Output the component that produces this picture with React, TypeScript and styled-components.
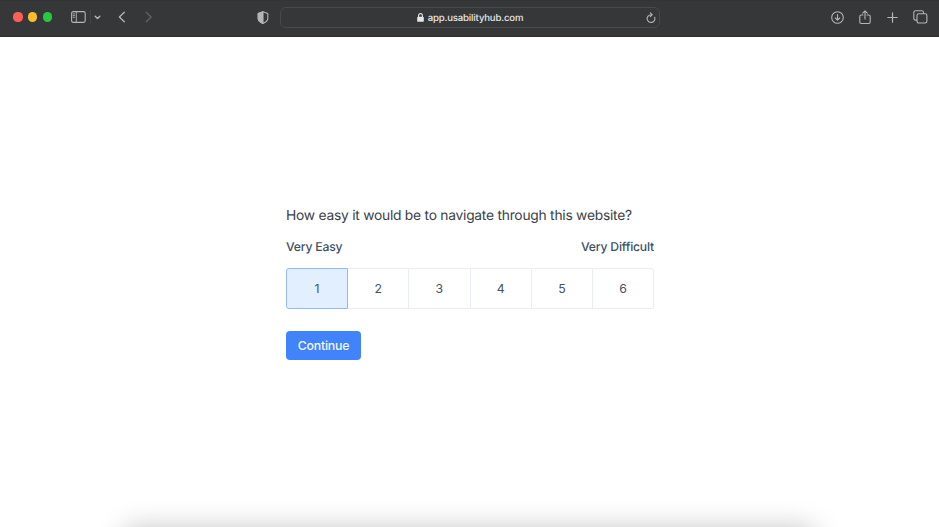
import React, { useState } from "react";
import styled, { createGlobalStyle } from "styled-components";

const GlobalStyle = createGlobalStyle`
  * { box-sizing: border-box; }
  html, body { margin: 0; background: #fff; }
  body { font-family: Inter, "Liberation Sans", sans-serif; overflow: hidden; text-rendering: geometricPrecision; }
  button { font: inherit; margin: 0; padding: 0; }
`;

const Window = styled.div`
  position: relative;
  width: 939px;
  height: 527px;
  display: flex;
  flex-direction: column;
  overflow: hidden;
  background: #fff;
`;

const Toolbar = styled.header`
  flex: none;
  height: 37px;
  display: grid;
  grid-template-columns: 280px 380px 1fr;
  padding-bottom: 3px;
  background: #363739;
  border-top: 1px solid #333436;
  border-bottom: 1px solid #2e2f31;
  color: #b4b5b6;
`;

const LeftControls = styled.div`
  display: flex;
  align-items: center;
  padding-left: 13.4px;
`;

const TrafficLights = styled.div`
  display: flex;
  gap: 5.6px;
  margin-right: 18.6px;
`;

const Light = styled.span<{ $color: string }>`
  width: 9.2px;
  height: 9.2px;
  border-radius: 50%;
  background: ${(p) => p.$color};
`;

const Icon = styled.svg<{ $gap?: number; $dim?: boolean }>`
  display: block;
  flex: none;
  fill: none;
  stroke: currentColor;
  stroke-width: 1.1;
  stroke-linecap: round;
  stroke-linejoin: round;
  margin-left: ${(p) => p.$gap ?? 0}px;
  color: ${(p) => (p.$dim ? "#616264" : "inherit")};
`;

const Divider = styled.span`
  width: 1px;
  height: 14px;
  margin-left: 4px;
  background: #424345;
`;

const AddressBar = styled.div`
  align-self: center;
  height: 21px;
  display: grid;
  grid-template-columns: 1fr auto 1fr;
  align-items: center;
  margin-top: 1px;
  border: 1px solid #48494b;
  border-radius: 6px;
`;

const Address = styled.div`
  grid-column: 2;
  display: flex;
  align-items: center;
  gap: 4px;
  color: #e6e6e7;
  font-size: 9.6px;
  font-weight: 500;
  line-height: 12px;
  letter-spacing: -0.17px;
`;

const Host = styled.span`
  padding-top: 2px;
`;

const Reload = styled.div`
  justify-self: end;
  margin-right: 3px;
`;

const RightControls = styled.div`
  display: flex;
  align-items: center;
  justify-content: flex-end;
  padding-right: 11px;
`;

const Page = styled.main`
  flex: 1;
  display: flex;
  flex-direction: column;
  align-items: flex-start;
  width: 368px;
  margin-left: 286px;
  padding-top: 169px;
`;

const Question = styled.h1`
  margin: 0;
  font-size: 13.8px;
  font-weight: 400;
  line-height: 20px;
  letter-spacing: -0.24px;
  white-space: nowrap;
  color: #3b4149;
`;

const ScaleLabels = styled.div`
  width: 100%;
  display: flex;
  justify-content: space-between;
  margin-top: 13px;
  font-size: 12.2px;
  font-weight: 500;
  line-height: 16px;
  letter-spacing: -0.2px;
  color: #40505f;
`;

const Scale = styled.div`
  width: 100%;
  height: 41px;
  display: grid;
  grid-template-columns: 62px repeat(4, 61.25px) 1fr;
  margin-top: 13px;
`;

const Choice = styled.button<{ $selected: boolean }>`
  border: 1px solid ${(p) => (p.$selected ? "#8fb9fa" : "#e9eef5")};
  border-left-width: ${(p) => (p.$selected ? 1 : 0)}px;
  background: ${(p) => (p.$selected ? "#e1efff" : "#fff")};
  color: #46535f;
  font-size: 12.3px;
  line-height: 38px;
  &:first-child { border-left-width: 1px; border-radius: 3px 0 0 3px; }
  &:last-child { border-radius: 0 3px 3px 0; }
`;

const ContinueButton = styled.button`
  width: 75px;
  height: 29px;
  margin-top: 22px;
  border: 0;
  border-radius: 4px;
  background: #4083fb;
  color: #f5f8ff;
  font-size: 12.3px;
  font-weight: 500;
  letter-spacing: -0.2px;
`;

const DockShadow = styled.div`
  position: absolute;
  left: 125px;
  right: 125px;
  top: 529px;
  height: 40px;
  box-shadow: 0 0 28px rgba(0, 0, 0, 0.25);
`;

const lights = ["#fd5f57", "#febb2f", "#28c840"];
const choices = [1, 2, 3, 4, 5, 6];

export default function App() {
  const [selected, setSelected] = useState(1);

  return (
    <>
      <GlobalStyle />
      <Window>
        <Toolbar>
          <LeftControls>
            <TrafficLights>
              {lights.map((color) => <Light key={color} $color={color} />)}
            </TrafficLights>
            <Icon width="15" height="12" viewBox="0 0 15 12">
              <rect x=".6" y=".6" width="13.6" height="10.8" rx="1.6" />
              <path d="M5.3.8v10.4M2.1 2.9h1.4M2.1 4.6h1.4M2.1 6.3h1.4" strokeWidth=".9" />
            </Icon>
            <Divider />
            <Icon $gap={3.4} width="7" height="5" viewBox="0 0 7 5">
              <path d="M1.2 1.2 3.5 3.5 5.8 1.2" strokeWidth="1.4" />
            </Icon>
            <Icon $gap={17.2} width="8" height="12" viewBox="0 0 8 12">
              <path d="M6.3 1.2 1.4 6l4.9 4.8" strokeWidth="1.3" />
            </Icon>
            <Icon $gap={18.4} $dim width="8" height="12" viewBox="0 0 8 12">
              <path d="M1.2 1.2 6.1 6l-4.9 4.8" strokeWidth="1.3" />
            </Icon>
            <Icon $gap={104.2} width="12" height="13" viewBox="0 0 12 13">
              <path d="M6 .8 10.8 2.5v5c0 2.1-2.6 4-4.8 5-2.2-1-4.8-2.9-4.8-5v-5z" />
              <path d="M6 .8 1.2 2.5v5c0 2.1 2.6 4 4.8 5z" fill="currentColor" />
            </Icon>
          </LeftControls>
          <AddressBar>
            <Address>
              <Icon width="7" height="9" viewBox="0 0 7 9">
                <rect x=".2" y="3.8" width="6.6" height="5" rx=".9" fill="currentColor" stroke="none" />
                <path d="M1.6 4V2.5a1.9 1.9 0 0 1 3.8 0V4" />
              </Icon>
              <Host>app.usabilityhub.com</Host>
            </Address>
            <Reload>
              <Icon width="10" height="12" viewBox="0 0 10 12">
                <path d="M8.7 5.3A3.9 3.9 0 1 1 5 2.7h.9M4.3.8l1.9 1.9-1.9 1.9" />
              </Icon>
            </Reload>
          </AddressBar>
          <RightControls>
            <Icon width="13" height="13" viewBox="0 0 13 13">
              <circle cx="6.5" cy="6.5" r="5.8" />
              <path d="M6.5 3.5v5.7M4.3 7l2.2 2.2L8.7 7" />
            </Icon>
            <Icon $gap={15} width="12" height="15" viewBox="0 0 12 15">
              <path d="M4 5H2.2Q.8 5 .8 6.3v5.8q0 1.4 1.4 1.4h7.6q1.4 0 1.4-1.4V6.3Q11.2 5 9.8 5H8M6 9V.9M3.7 3.1 6 .9l2.3 2.2" />
            </Icon>
            <Icon $gap={15.4} width="11" height="11" viewBox="0 0 11 11">
              <path d="M5.5.8v9.4M.8 5.5h9.4" strokeWidth="1.2" />
            </Icon>
            <Icon $gap={15.4} width="15" height="14" viewBox="0 0 15 14">
              <rect x="4" y="3.7" width="9.9" height="9.3" rx="1.7" />
              <path d="M3.8 10.1H2.5Q.8 10.1.8 8.4V2.5Q.8.8 2.5.8h6.3q1.7 0 1.7 1.7v1" />
            </Icon>
          </RightControls>
        </Toolbar>
        <Page>
          <Question>How easy it would be to navigate through this website?</Question>
          <ScaleLabels>
            <span>Very Easy</span>
            <span>Very Difficult</span>
          </ScaleLabels>
          <Scale>
            {choices.map((value) => (
              <Choice key={value} $selected={selected === value} onClick={() => setSelected(value)}>
                {value}
              </Choice>
            ))}
          </Scale>
          <ContinueButton>Continue</ContinueButton>
        </Page>
        <DockShadow />
      </Window>
    </>
  );
}
